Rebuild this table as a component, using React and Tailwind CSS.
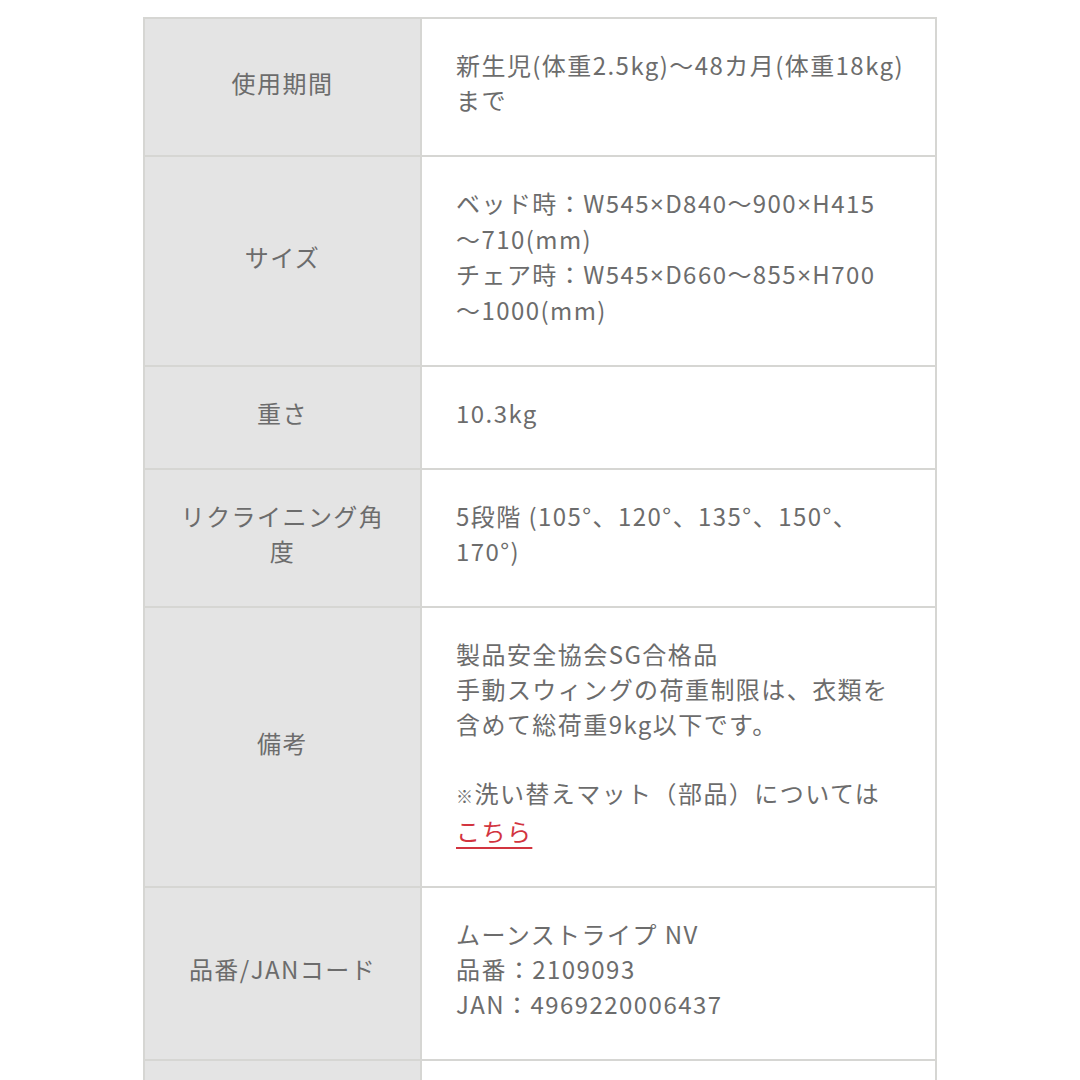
import React from 'react';

// Spec table rows: label on the left, value lines on the right
const rows = [
  { label: ['使用期間'], lines: ['新生児(体重2.5kg)〜48カ月(体重18kg)', 'まで'] },
  {
    label: ['サイズ'],
    lines: [
      'ベッド時：W545×D840〜900×H415',
      '〜710(mm)',
      'チェア時：W545×D660〜855×H700',
      '〜1000(mm)',
    ],
  },
  { label: ['重さ'], lines: ['10.3kg'] },
  { label: ['リクライニング角', '度'], lines: ['5段階 (105°、120°、135°、150°、', '170°)'] },
  {
    label: ['備考'],
    lines: [
      '製品安全協会SG合格品',
      '手動スウィングの荷重制限は、衣類を',
      '含めて総荷重9kg以下です。',
      '',
      'NOTE',
      'LINK',
    ],
  },
  { label: ['品番/JANコード'], lines: ['ムーンストライプ NV', '品番：2109093', 'JAN：4969220006437'] },
];

// the latin "×" is narrower than the CJK font's one
function withTimes(text) {
  const parts = text.split('×');
  return parts.map((p, i) => (
    <React.Fragment key={i}>
      {i > 0 && <span style={{ fontFamily: '"Noto Sans", sans-serif' }}>×</span>}
      {p}
    </React.Fragment>
  ));
}

function ValueLine({ text }) {
  if (text === '') return <div className="h-[34px]" />;
  if (text === 'LINK') {
    return (
      <div>
        <a
          href="#"
          className="text-[#d2343f] underline decoration-2 underline-offset-[6px]"
        >
          こちら
        </a>
      </div>
    );
  }
  if (text === 'NOTE') {
    return (
      <div className="whitespace-nowrap">
        <span className="text-[17px]">※</span>洗い替えマット（部品）については
      </div>
    );
  }
  return <div className="whitespace-nowrap">{withTimes(text)}</div>;
}

export default function App() {
  return (
    <div
      className="min-h-screen bg-white pt-[17px] text-[#6c6c6c]"
      style={{ fontFamily: '"Noto Sans CJK JP", "Noto Sans", sans-serif' }}
    >
      <div className="mx-auto w-[794px] border-2 border-b-0 border-[#d6d6d3] text-[24px] leading-[35px] tracking-[0.06em]">
        {rows.map((row, i) => (
          <div
            key={i}
            className="grid grid-cols-[277px_1fr] border-b-2 border-[#d6d6d3]"
          >
            <div className="flex flex-col items-center justify-center border-r-2 border-[#d6d6d3] bg-[#e4e4e4] px-6 pb-[10px] text-center">
              {row.label.map((l) => (
                <div key={l}>{l}</div>
              ))}
            </div>
            <div className="pb-[38px] pl-[34px] pr-4 pt-[28px]">
              {row.lines.map((t, j) => (
                <ValueLine key={j} text={t} />
              ))}
            </div>
          </div>
        ))}
        <div className="grid h-[60px] grid-cols-[277px_1fr]">
          <div className="border-r-2 border-[#d6d6d3] bg-[#e4e4e4]" />
          <div />
        </div>
      </div>
    </div>
  );
}
